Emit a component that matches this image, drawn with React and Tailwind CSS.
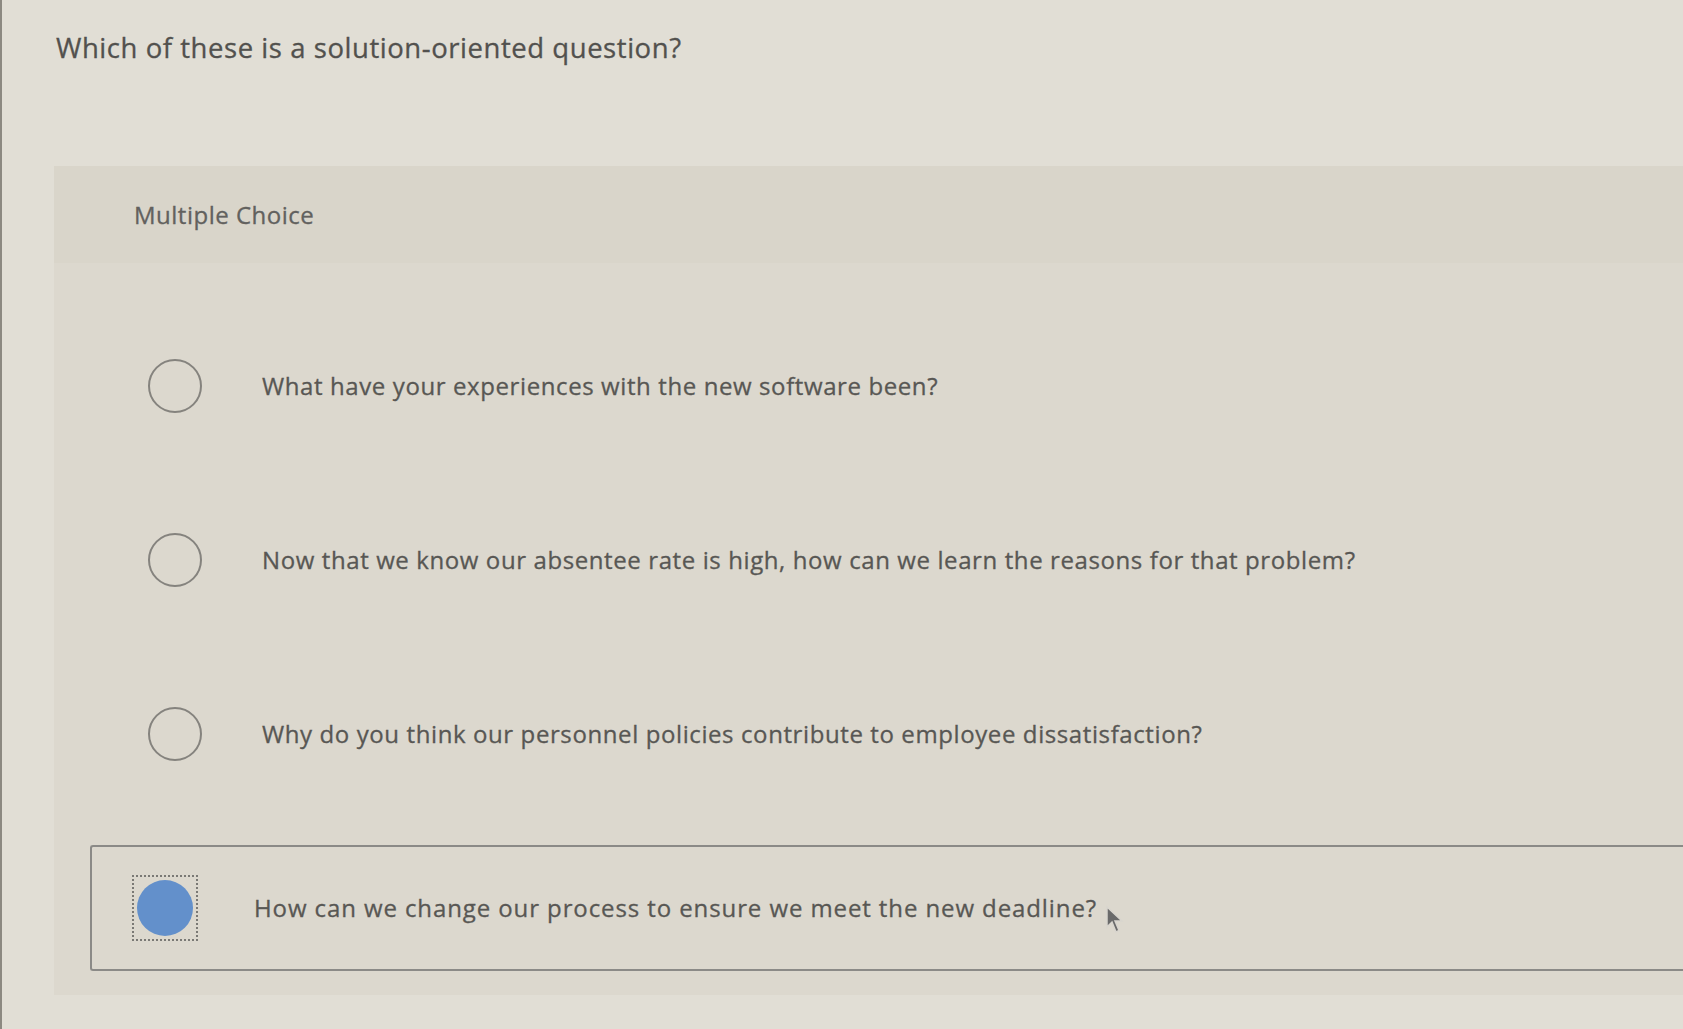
import React from 'react'

const options = [
    { id: 1, text: 'What have your experiences with the new software been?' },
    { id: 2, text: 'Now that we know our absentee rate is high, how can we learn the reasons for that problem?' },
    { id: 3, text: 'Why do you think our personnel policies contribute to employee dissatisfaction?' },
    { id: 4, text: 'How can we change our process to ensure we meet the new deadline?' },
]

const Radio = ({ checked }) => {
    if (checked) {
        return (
            <div className='w-[66px] h-[66px] shrink-0 border-2 border-dotted border-[#7a7975] flex items-center justify-center'>
                <div className='w-[56px] h-[56px] rounded-full bg-[#6390cb]'></div>
            </div>
        )
    }
    return (
        <div className='w-[66px] h-[66px] shrink-0 flex items-center justify-center'>
            <div className='w-[54px] h-[54px] rounded-full border-2 border-[#85837e]'></div>
        </div>
    )
}

const App = () => {
    const selected = 4

    return (
        <div className="w-[1683px] h-[1029px] overflow-hidden bg-[#e1ded5] border-l-2 border-[#8c8981] font-['Open_Sans',sans-serif] [-webkit-text-stroke:0.3px] text-[#585754]">
            <h1 className='pl-[54px] pt-[30px] text-[27.5px] leading-[36px] tracking-[0.55px] text-[#52514e]'>Which of these is a solution-oriented question?</h1>

            <div className='ml-[52px] mt-[100px] bg-[#dcd8ce]'>
                <div className='h-[97px] bg-[#d9d5ca] flex items-center pl-[80px] text-[24px] tracking-[0.5px] text-[#62615e]'>Multiple Choice</div>

                <div className='pt-[36px] pl-[36px]'>
                    {options.map((opt) => (
                        <div key={opt.id} className='h-[174px] flex items-center'>
                            {opt.id === selected ? (
                                <div className='relative w-full h-[126px] flex items-center gap-[56px] pl-[40px] border-2 border-r-0 border-[#8b8a87] rounded-l-[3px]'>
                                    <Radio checked />
                                    <span className='text-[24px] tracking-[0.9px]'>{opt.text}</span>
                                    <svg className='absolute left-[1013px] top-[58px]' width="20" height="30" viewBox="0 0 20 30">
                                        <path d="M2 2 L2 22 L7 17 L11 27 L14 25.5 L10 16 L17 16 Z" fill="#6a6a6a" stroke="#d8d5ce" strokeWidth="1.5" />
                                    </svg>
                                </div>
                            ) : (
                                <div className='w-full flex items-center gap-[54px] pl-[52px]'>
                                    <Radio />
                                    <span className='text-[24px] tracking-[0.6px]'>{opt.text}</span>
                                </div>
                            )}
                        </div>
                    ))}
                </div>
            </div>
        </div>
    )
}

export default App
